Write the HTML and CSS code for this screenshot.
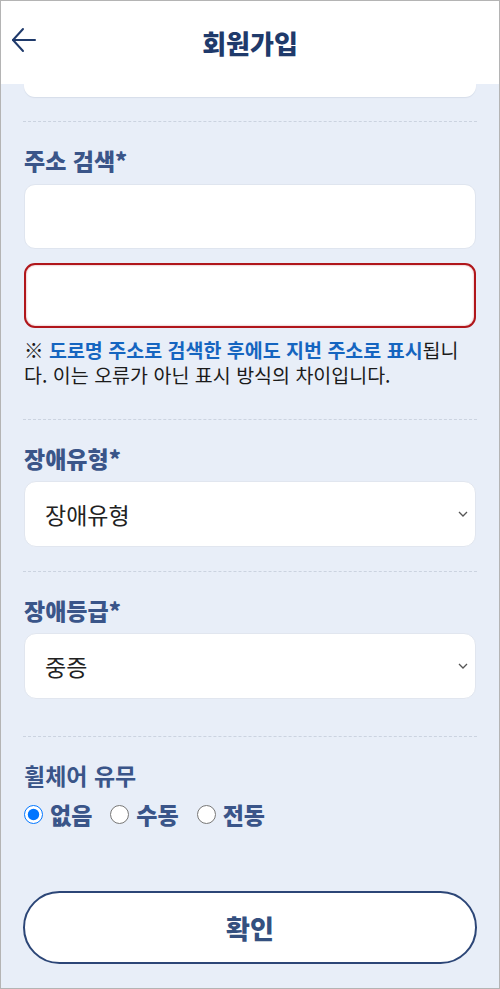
FILE: index.html
```html
<!DOCTYPE html>
<html lang="ko">
<head>
     <meta charset="UTF-8">
     <meta name="viewport" content="width=device-width, initial-scale=1.0">
     <title>회원가입</title>
     <link rel="stylesheet" href="styles.css">
</head>
<body>
     <div class="screen">
          <header class="topbar">
               <button type="button" class="back" aria-label="뒤로">
                    <svg width="26" height="26" viewBox="0 0 26 26" fill="none" stroke="#1f3a6b" stroke-width="2" stroke-linecap="round" stroke-linejoin="round">
                         <path d="M24 13H2"/>
                         <path d="M12 2L2 13l10 11"/>
                    </svg>
               </button>
               <h1 class="title">회원가입</h1>
               <span class="spacer"></span>
          </header>

          <main class="form">
               <div class="card-tail"></div>
               <hr class="divider">

               <section class="field">
                    <label class="label">주소 검색*</label>
                    <input class="input" type="text">
                    <input class="input input-error" type="text">
                    <p class="note">※ <b class="hl">도로명 주소로 검색한 후에도 지번 주소로 표시</b>됩니다. 이는 오류가 아닌 표시 방식의 차이입니다.</p>
               </section>
               <hr class="divider divider-note">

               <section class="field">
                    <label class="label">장애유형*</label>
                    <div class="select-wrap">
                         <select class="select">
                              <option>장애유형</option>
                         </select>
                         <svg class="chev" width="10" height="6" viewBox="0 0 10 6" fill="none" stroke="#555" stroke-width="1.3"><path d="M1 1l4 4 4-4"/></svg>
                    </div>
               </section>
               <hr class="divider">

               <section class="field">
                    <label class="label">장애등급*</label>
                    <div class="select-wrap">
                         <select class="select">
                              <option>중증</option>
                         </select>
                         <svg class="chev" width="10" height="6" viewBox="0 0 10 6" fill="none" stroke="#555" stroke-width="1.3"><path d="M1 1l4 4 4-4"/></svg>
                    </div>
               </section>
               <hr class="divider divider-low">

               <section class="field">
                    <div class="label label-soft">휠체어 유무</div>
                    <div class="radios">
                         <label class="radio"><input type="radio" name="wheel" checked> 없음</label>
                         <label class="radio"><input type="radio" name="wheel"> 수동</label>
                         <label class="radio"><input type="radio" name="wheel"> 전동</label>
                    </div>
               </section>

               <button type="button" class="confirm">확인</button>
          </main>
     </div>
</body>
</html>
```

FILE: styles.css
```css
* {
     box-sizing: border-box;
}

body {
     margin: 0;
     font-family: "Noto Sans CJK KR", "Noto Sans", sans-serif;
}

.screen {
     width: 500px;
     height: 989px;
     border: 1px solid #b4b4b4;
     background: #e8eef8;
     overflow: hidden;
}

.topbar {
     height: 83px;
     background: #fff;
     display: flex;
     align-items: center;
     padding: 0 10px;
}

.back {
     border: 0;
     background: none;
     padding: 0;
     width: 30px;
     height: 30px;
     display: flex;
     align-items: center;
     margin-top: -6px;
}

.title {
     flex: 1;
     margin: 0;
     text-align: center;
     font-size: 26px;
     font-weight: 900;
     color: #1f3a6b;
}

.spacer {
     width: 30px;
}

.form {
     padding: 0 22px;
}

.card-tail {
     height: 13px;
     margin: 0 1px;
     background: #fff;
     border-radius: 0 0 11px 11px;
     box-shadow: 0 1px 1px #d6dde9;
}

.divider {
     border: 0;
     border-top: 1px dashed #cbd3e0;
     margin: 24px 0 0;
}

.divider-note {
     margin-top: 32px;
}

.divider-low {
     margin-top: 37px;
}

.field {
     padding: 0 1px;
     display: flex;
     flex-direction: column;
}

.label {
     margin-top: 24px;
     font-size: 23px;
     line-height: 28px;
     font-weight: 900;
     color: #3a5589;
}

.label-soft {
     font-weight: 700;
}

.input {
     margin-top: 10px;
     height: 65px;
     border: 1px solid #dfe5ef;
     border-radius: 11px;
     background: #fff;
     font-size: 20px;
     padding: 0 20px;
     outline: none;
}

.input + .input {
     margin-top: 14px;
}

.input-error {
     border: 2px solid #b0161b;
     box-shadow: inset 0 0 2px rgba(176, 22, 27, 0.5);
}

.note {
     margin: 9px 6px 0 0;
     font-size: 19.5px;
     line-height: 25px;
     color: #1b1b1b;
}

.hl {
     color: #1565c0;
}

.select-wrap {
     margin-top: 9px;
     display: grid;
     align-items: center;
}

.select-wrap > * {
     grid-area: 1 / 1;
}

.select {
     appearance: none;
     height: 66px;
     border: 1px solid #e1e6ef;
     border-radius: 12px;
     background: #fff;
     padding: 0 20px;
     font-family: inherit;
     font-size: 23px;
     color: #222;
}

.chev {
     justify-self: end;
     margin-right: 8px;
     pointer-events: none;
}

.radios {
     display: flex;
     gap: 18px;
     margin-top: 8px;
}

.radio {
     display: flex;
     align-items: center;
     font-size: 23px;
     font-weight: 900;
     color: #3a5589;
}

.radio input {
     width: 19px;
     height: 19px;
     margin: 0 7px 0 0;
}

.confirm {
     display: block;
     width: 100%;
     height: 73px;
     margin-top: 60px;
     border: 2.5px solid #2c4677;
     border-radius: 37px;
     background: #fff;
     font-family: inherit;
     font-size: 26px;
     font-weight: 900;
     color: #34507f;
}
```
